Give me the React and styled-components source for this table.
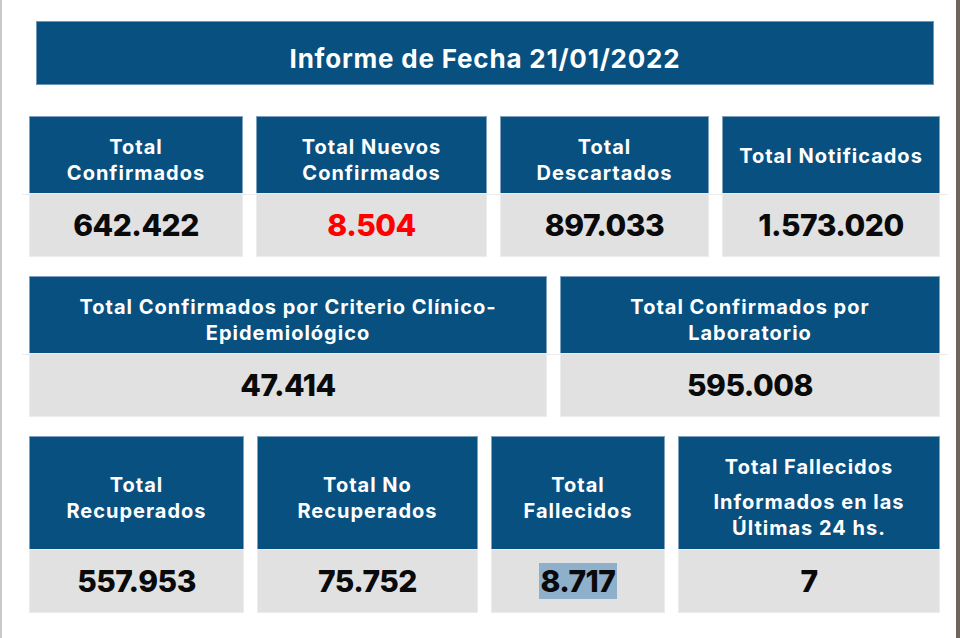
import React from 'react';
import styled, { createGlobalStyle } from 'styled-components';

const GlobalStyle = createGlobalStyle`
  html, body {
    margin: 0;
    padding: 0;
    background: #fff;
  }
  * {
    box-sizing: border-box;
  }
`;

const Page = styled.div`
  width: 960px;
  height: 638px;
  overflow: hidden;
  background: #fff;
  border-left: 2px solid #c9c9c5;
  border-right: 4px solid #6f655c;
  padding: 22px 8px 0 20px;
  font-family: Inter, "Noto Sans", sans-serif;
`;

const Banner = styled.div`
  margin: 0 15px 0 15px;
  height: 62px;
  background: #08507f;
  color: #fff;
  display: flex;
  align-items: center;
  justify-content: center;
  font-size: 26px;
  font-weight: 700;
  letter-spacing: 0.8px;
  padding-top: 11px;
  box-shadow: 0 0 0 1px #6f97b5;
`;

const Row = styled.div`
  display: grid;
  grid-template-columns: ${({ $cols }) => $cols};
  column-gap: 15px;
  margin-top: ${({ $top }) => $top}px;
  padding: 0 9px 0 8px;
  background: ${({ $line, $head }) =>
    $line
      ? `linear-gradient(to bottom, transparent ${$head}px, #ececec ${$head}px, #ececec ${$head + 1}px, transparent ${$head + 1}px)`
      : 'none'};
`;

const Card = styled.div`
  display: flex;
  flex-direction: column;
`;

const Header = styled.div`
  height: ${({ $h }) => $h}px;
  background: #08507f;
  color: #fff;
  display: flex;
  flex-direction: column;
  align-items: center;
  justify-content: center;
  text-align: center;
  font-size: 20px;
  font-weight: 700;
  letter-spacing: 1px;
  line-height: 26px;
  padding: ${({ $single }) => ($single ? '0' : '8px')} 6px 0;
  box-shadow: 0 0 0 1px #7ea2bd;
`;

const Para = styled.div`
  & + & {
    margin-top: 9px;
  }
`;

const Value = styled.div`
  height: 62px;
  background: #e1e1e1;
  color: ${({ $red }) => ($red ? '#ff0000' : '#0a0a0a')};
  display: flex;
  align-items: center;
  justify-content: center;
  font-size: 30px;
  font-weight: 800;
  letter-spacing: -0.5px;
  box-shadow: 0 0 0 1px #ececec;
`;

const Highlight = styled.span`
  background: #8fb0cb;
  padding: 0 1px;
`;

function StatCard({ title, value, h = 77, red }) {
  const paras = Array.isArray(title) ? title : [title];
  const single = paras.length === 1 && !paras[0].includes('\n');
  return (
    <Card>
      <Header $h={h} $single={single}>
        {paras.map((p, i) => (
          <Para key={i}>
            {p.split('\n').map((l, j) => (
              <div key={j}>{l}</div>
            ))}
          </Para>
        ))}
      </Header>
      <Value $red={red}>{value}</Value>
    </Card>
  );
}

function App() {
  return (
    <>
      <GlobalStyle />
      <Page>
        <Banner>Informe de Fecha 21/01/2022</Banner>

        <Row $cols="212px 229px 207px 216px" $top={33} $line $head={77}>
          <StatCard title={'Total\nConfirmados'} value="642.422" />
          <StatCard title={'Total Nuevos\nConfirmados'} value="8.504" red />
          <StatCard title={'Total\nDescartados'} value="897.033" />
          <StatCard title="Total Notificados" value="1.573.020" />
        </Row>

        <Row $cols="516px 378px" $top={21} $line $head={77}>
          <StatCard
            title={'Total Confirmados por Criterio Clínico-\nEpidemiológico'}
            value="47.414"
          />
          <StatCard title={'Total Confirmados por\nLaboratorio'} value="595.008" />
        </Row>

        <Row $cols="213px 219px 172px 260px" $top={21}>
          <StatCard h={113} title={'Total\nRecuperados'} value="557.953" />
          <StatCard h={113} title={'Total No\nRecuperados'} value="75.752" />
          <StatCard
            h={113}
            title={'Total\nFallecidos'}
            value={<Highlight>8.717</Highlight>}
          />
          <StatCard
            h={113}
            title={['Total Fallecidos', 'Informados en las\nÚltimas 24 hs.']}
            value="7"
          />
        </Row>
      </Page>
    </>
  );
}

export default App;
